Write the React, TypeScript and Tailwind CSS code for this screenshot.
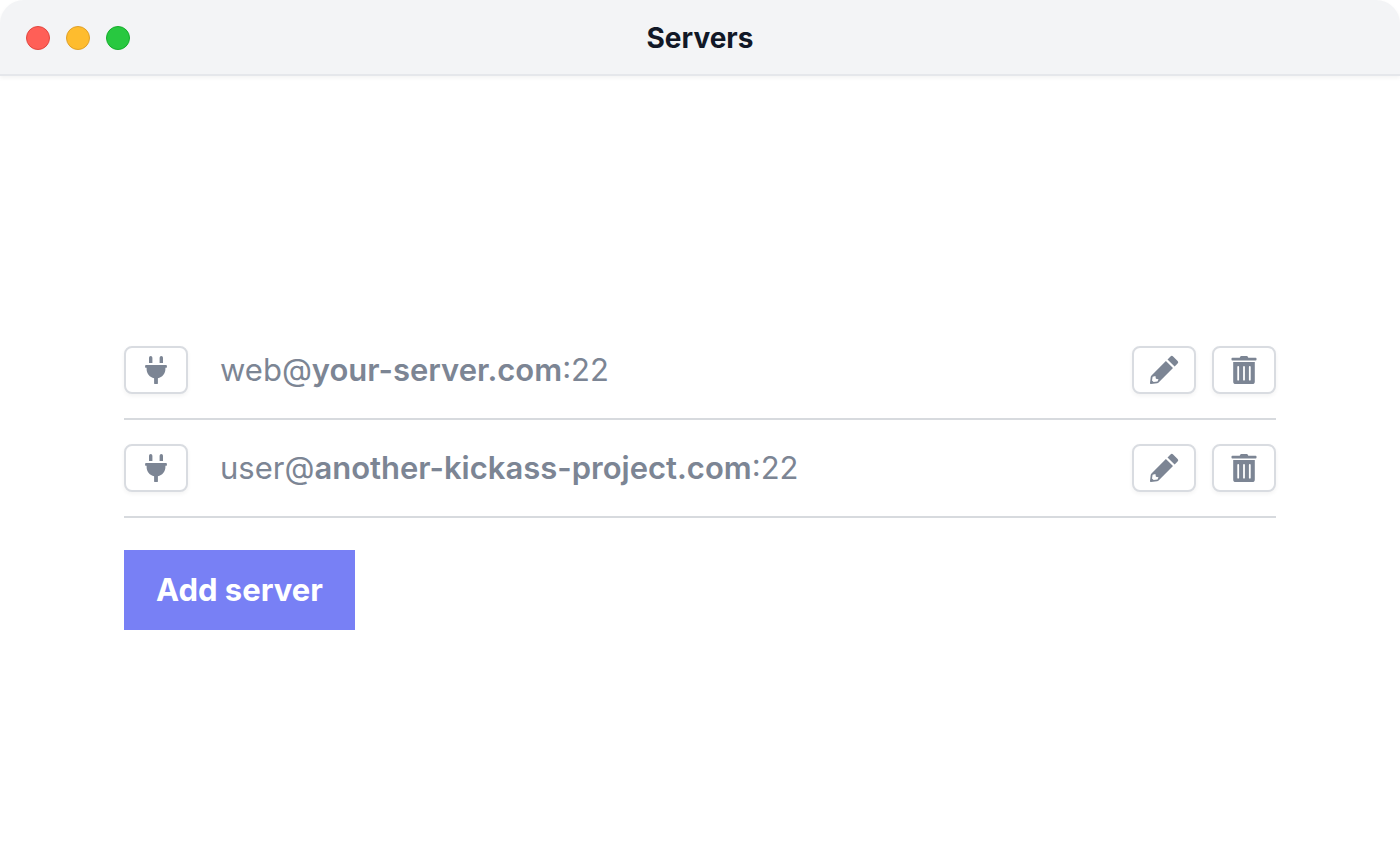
import React from "react";

type Server = { user: string; host: string; port: number };

const servers: Server[] = [
  { user: "web", host: "your-server.com", port: 22 },
  { user: "user", host: "another-kickass-project.com", port: 22 },
];

function PlugIcon() {
  return (
    <svg viewBox="0 0 32 32" className="size-8" fill="currentColor" aria-hidden="true">
      <path d="M9 9V3.700a1.700 1.700 0 0 1 3.400 0V9ZM19.600 9V3.700a1.700 1.700 0 0 1 3.400 0V9Z" />
      <path d="M6 11h20a.9.900 0 0 1 .9.900v1a.9.900 0 0 1-.9.900h-.6v1.200c0 4.600-3.200 8.400-7.500 9.300v4.900a.9.900 0 0 1-.9.900h-2a.9.900 0 0 1-.9-.9v-4.900c-4.300-.9-7.500-4.700-7.500-9.300v-1.200H6a.9.900 0 0 1-.9-.9v-1A.9.900 0 0 1 6 11Z" />
    </svg>
  );
}

function PencilIcon() {
  return (
    <svg viewBox="0 0 32 32" className="size-8" fill="currentColor" aria-hidden="true">
      <path d="m19.500 5.400 3-3a1.800 1.800 0 0 1 2.600 0l4.500 4.500a1.800 1.800 0 0 1 0 2.600l-3 3Z" />
      <path
        fillRule="evenodd"
        d="m17.900 7 7.100 7.100L10.600 28.500a2.600 2.600 0 0 1-1.500.8L3 30a.9.900 0 0 1-1-1l.7-6.100a2.600 2.600 0 0 1 .8-1.500ZM4.600 22.700l-.6 3.700 1.600 1.600 3.900-.6 1-2.200-2.600-.4-.5-2.800Z"
      />
    </svg>
  );
}

function TrashIcon() {
  return (
    <svg viewBox="0 0 32 32" className="size-8" fill="currentColor" aria-hidden="true">
      <path d="M4.300 3.800h7.400l.6-1.200a1.100 1.100 0 0 1 1-.6h5.400a1.100 1.100 0 0 1 1 .6l.6 1.200h7.400a.8.800 0 0 1 .8.800v1.200a.8.800 0 0 1-.8.800H4.300a.8.800 0 0 1-.8-.8V4.600a.8.800 0 0 1 .8-.8Z" />
      <path
        fillRule="evenodd"
        d="M5.200 8h21.600v19.400a2.600 2.600 0 0 1-2.600 2.600H7.800a2.600 2.600 0 0 1-2.600-2.600ZM10.200 12a.9.900 0 0 0-.9.900v12.800a.9.900 0 0 0 1.800 0V12.900a.9.900 0 0 0-.9-.9ZM16 12a.9.900 0 0 0-.9.900v12.800a.9.900 0 0 0 1.800 0V12.900a.9.900 0 0 0-.9-.9ZM21.800 12a.9.900 0 0 0-.9.900v12.800a.9.900 0 0 0 1.800 0V12.900a.9.900 0 0 0-.9-.9Z"
      />
    </svg>
  );
}

function IconButton({ label, children }: { label: string; children: React.ReactNode }) {
  return (
    <button
      type="button"
      aria-label={label}
      className="flex h-12 w-16 shrink-0 items-center justify-center rounded-lg border-2 border-[#d9dce1] bg-white shadow-[0_2px_4px_rgba(0,0,0,0.05)]"
    >
      {children}
    </button>
  );
}

export default function App() {
  return (
    <div className="flex min-h-screen flex-col bg-white font-['Inter',sans-serif]">
      <header className="grid grid-cols-3 items-center rounded-t-3xl border-b-2 border-[#e5e7eb] bg-[#f3f4f6] px-6.5 pt-[17px] pb-[15px] shadow-[0_2px_4px_rgba(0,0,0,0.05)]">
        <div className="flex gap-4">
          <button type="button" aria-label="Close" className="size-6 rounded-full border border-[#e2463f] bg-[#ff5f57]" />
          <button type="button" aria-label="Minimize" className="size-6 rounded-full border border-[#e0a028] bg-[#febc2e]" />
          <button type="button" aria-label="Zoom" className="size-6 rounded-full border border-[#14ae2b] bg-[#28c840]" />
        </div>
        <h1 className="text-center text-[28px] leading-[42px] font-bold text-[#111827]">Servers</h1>
      </header>

      <main className="flex flex-1 flex-col justify-center px-31 pt-7 text-[#7c8594]">
        <ul>
          {servers.map((server) => (
            <li key={server.host} className="flex items-center gap-4 border-b-2 border-[#d7dade] py-6">
              <IconButton label={`Connect to ${server.host}`}>
                <PlugIcon />
              </IconButton>
              <p className="flex-1 pl-4 text-[31px] leading-12 font-normal">
                {server.user}@<strong className="font-semibold">{server.host}</strong>:{server.port}
              </p>
              <IconButton label={`Edit ${server.host}`}>
                <PencilIcon />
              </IconButton>
              <IconButton label={`Delete ${server.host}`}>
                <TrashIcon />
              </IconButton>
            </li>
          ))}
        </ul>
        <button
          type="button"
          className="mt-8 self-start bg-[#7880f5] px-8 py-4 text-[31px] leading-12 font-bold text-white"
        >
          Add server
        </button>
      </main>
    </div>
  );
}
